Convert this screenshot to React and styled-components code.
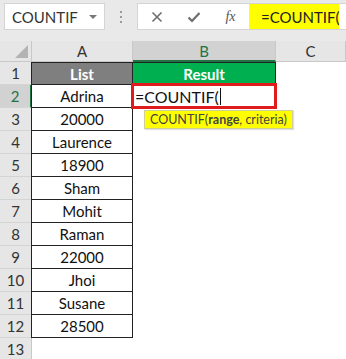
import React from 'react';
import styled, { createGlobalStyle } from 'styled-components';

const GlobalStyle = createGlobalStyle`
  html, body {
    margin: 0;
    padding: 0;
    background: #ffffff;
    overflow: hidden;
  }
  body {
    font-family: Lato, "Open Sans", "Liberation Sans", sans-serif;
  }
`;

const Page = styled.div`
  width: 346px;
  height: 359px;
  overflow: hidden;
  background: #ffffff;
`;

const Toolbar = styled.div`
  height: 41px;
  background: #e9e9e9;
  display: flex;
  align-items: flex-start;
  padding-top: 3px;
  box-sizing: border-box;
`;

const NameBox = styled.div`
  margin-left: 4px;
  width: 101px;
  height: 27px;
  box-sizing: border-box;
  background: #fff;
  border: 1px solid #d4d4d4;
  display: flex;
  align-items: center;
  justify-content: space-between;
  padding: 0 7px 0 7px;
  font-size: 15px;
  color: #333;
`;

const Caret = styled.span`
  width: 0;
  height: 0;
  border-left: 4px solid transparent;
  border-right: 4px solid transparent;
  border-top: 4px solid #777;
`;

const Dots = styled.div`
  width: 32px;
  height: 27px;
  display: flex;
  flex-direction: column;
  align-items: center;
  justify-content: center;
  gap: 3px;

  span {
    width: 2px;
    height: 2px;
    background: #9a9a9a;
  }
`;

const FormulaBox = styled.div`
  flex: 1;
  height: 27px;
  box-sizing: border-box;
  background: #fff;
  border: 1px solid #d4d4d4;
  border-right: none;
  display: flex;
  align-items: stretch;
`;

const IconSlot = styled.div`
  width: 37px;
  display: flex;
  align-items: center;
  justify-content: center;
  color: #6e6e6e;
`;

const Fx = styled.span`
  font-family: "Liberation Serif", serif;
  font-style: italic;
  font-size: 14px;
  color: #555;
`;

const Input = styled.div`
  width: 90px;
  background: #ffff00;
  display: flex;
  align-items: center;
  padding-left: 12px;
  box-sizing: border-box;
  font-size: 15px;
  color: #222;
`;

const Sheet = styled.div`
  display: grid;
  grid-template-columns: 32px 101px 143px 70px;
  grid-template-rows: 21px repeat(13, 23px);
`;

const Corner = styled.div`
  background: #e6e6e6;
  border-right: 1px solid #c8c8c8;
  border-bottom: 1px solid #c8c8c8;
  box-sizing: border-box;
  position: relative;

  &::after {
    content: '';
    position: absolute;
    right: 3px;
    bottom: 3px;
    width: 0;
    height: 0;
    border-left: 13px solid transparent;
    border-bottom: 13px solid #b3b3b3;
  }
`;

const ColHead = styled.div`
  background: ${p => (p.$active ? '#d2d2d2' : '#e6e6e6')};
  color: ${p => (p.$active ? '#217346' : '#333')};
  border-right: 1px solid #c8c8c8;
  border-bottom: ${p => (p.$active ? '2px solid #217346' : '1px solid #c8c8c8')};
  box-sizing: border-box;
  display: flex;
  align-items: center;
  justify-content: center;
  font-size: 15px;
`;

const RowHead = styled.div`
  background: ${p => (p.$active ? '#d2d2d2' : '#e6e6e6')};
  color: ${p => (p.$active ? '#217346' : '#333')};
  border-right: ${p => (p.$active ? '2px solid #217346' : '1px solid #c8c8c8')};
  border-bottom: 1px solid #d4d4d4;
  box-sizing: border-box;
  display: flex;
  align-items: center;
  justify-content: center;
  font-size: 15px;
`;

const HeadCell = styled.div`
  background: ${p => p.$bg};
  color: #fff;
  font-weight: 700;
  font-size: 15px;
  border: 1px solid #222;
  margin: 0 0 0 -1px;
  display: flex;
  align-items: center;
  justify-content: center;
`;

const DataCell = styled.div`
  border: 1px solid #222;
  border-top: none;
  margin-left: -1px;
  display: flex;
  align-items: center;
  justify-content: center;
  font-size: 15px;
  color: #111;
`;

const Blank = styled.div`
  background: #fff;
`;

const EditCell = styled.div`
  position: relative;
  z-index: 2;
  margin: -2px -1px -1px -2px;
  border: 3px solid #e01b1b;
  background: #fff;
  display: flex;
  align-items: center;
  padding-left: 1px;
  font-size: 16px;
  color: #111;
`;

const Cursor = styled.span`
  display: inline-block;
  width: 1px;
  height: 17px;
  background: #111;
  margin-left: 1px;
`;

const Tip = styled.div`
  position: absolute;
  left: 10px;
  top: 24px;
  height: 17px;
  padding: 0 5px;
  white-space: nowrap;
  background: #ffff00;
  border: 1px solid #cfcf9a;
  box-shadow: 1px 1px 1px rgba(0, 0, 0, 0.12);
  display: flex;
  align-items: center;
  font-size: 12.5px;
  color: #444;

  b {
    font-weight: 700;
  }
`;

const names = ['Adrina', '20000', 'Laurence', '18900', 'Sham', 'Mohit', 'Raman', '22000', 'Jhoi', 'Susane', '28500'];

export default function App() {
  return (
    <Page>
      <GlobalStyle />
      <Toolbar>
        <NameBox>
          COUNTIF
          <Caret />
        </NameBox>
        <Dots>
          <span />
          <span />
          <span />
        </Dots>
        <FormulaBox>
          <IconSlot>
            <svg width="12" height="12" viewBox="0 0 12 12">
              <path d="M1.5 1.5 L10.5 10.5 M10.5 1.5 L1.5 10.5" stroke="#6e6e6e" strokeWidth="1.6" />
            </svg>
          </IconSlot>
          <IconSlot>
            <svg width="14" height="12" viewBox="0 0 14 12">
              <path d="M1.5 6.5 L5 10 L12.5 2" stroke="#6e6e6e" strokeWidth="2.2" fill="none" />
            </svg>
          </IconSlot>
          <IconSlot>
            <Fx>fx</Fx>
          </IconSlot>
          <Input>=COUNTIF(</Input>
        </FormulaBox>
      </Toolbar>
      <Sheet>
        <Corner />
        <ColHead>A</ColHead>
        <ColHead $active>B</ColHead>
        <ColHead>C</ColHead>

        <RowHead>1</RowHead>
        <HeadCell $bg="#7f7f7f">List</HeadCell>
        <HeadCell $bg="#00b050">Result</HeadCell>
        <Blank />

        {names.map((n, i) => (
          <React.Fragment key={n}>
            <RowHead $active={i === 0}>{i + 2}</RowHead>
            <DataCell>{n}</DataCell>
            {i === 0 ? (
              <EditCell>
                =COUNTIF(
                <Cursor />
                <Tip>
                  COUNTIF(<b>range</b>, criteria)
                </Tip>
              </EditCell>
            ) : (
              <Blank />
            )}
            <Blank />
          </React.Fragment>
        ))}

        <RowHead>13</RowHead>
        <Blank />
        <Blank />
        <Blank />
      </Sheet>
    </Page>
  );
}
